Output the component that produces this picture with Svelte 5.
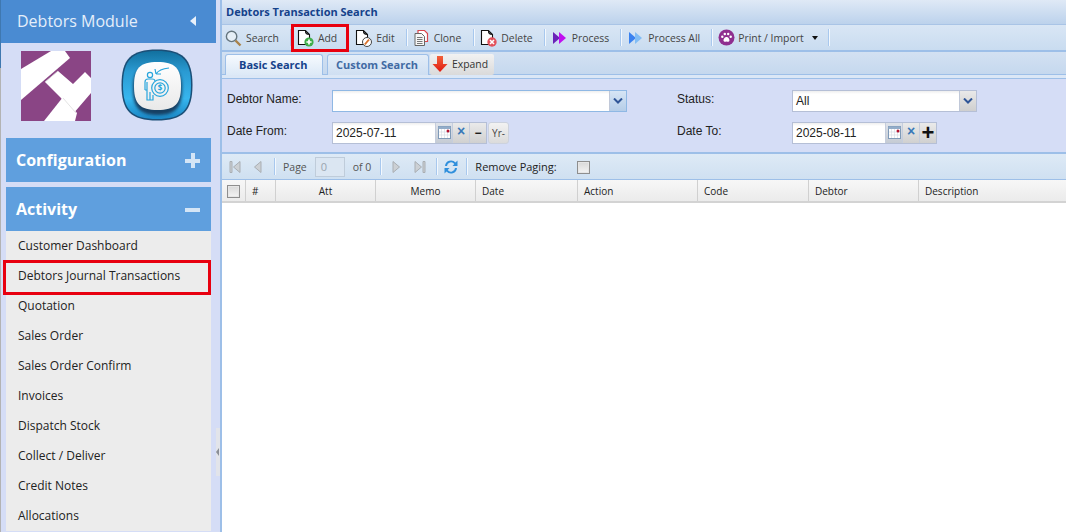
<script>
  const menu = ['Customer Dashboard','Debtors Journal Transactions','Quotation','Sales Order','Sales Order Confirm','Invoices','Dispatch Stock','Collect / Deliver','Credit Notes','Allocations'];
  const cols = [
    {t:'Att',w:100,c:1},{t:'Memo',w:100,c:1},{t:'Date',w:102},{t:'Action',w:120},{t:'Code',w:111},{t:'Debtor',w:110},{t:'Description',w:147}
  ];
</script>

<div class="page">
  <aside class="side">
    <div class="mod"><span>Debtors Module</span><i class="tri"></i></div>
    <div class="logos">
      <svg class="logo1" viewBox="0 0 70 70" width="70" height="70">
        <rect width="70" height="70" fill="#8a4585"/>
        <path d="M0 18 L30 0 L44 0 L49 7 L0 49Z" fill="#fff"/>
        <path d="M37 20 L52 33 L64 21 L70 27 L70 42 L52 63 L40 47 L24 31Z" fill="#fff"/>
        <path d="M42 46 L23 70 L54 70 L56 62Z" fill="#fff"/>
        <path d="M24 31 L37 20 M42 47 L55 62" stroke="#dcdcdc" stroke-width=".8" fill="none"/>
      </svg>
      <svg class="logo2" viewBox="0 0 72 72" width="72" height="72">
        <defs>
          <linearGradient id="rim" x1="0" y1="0" x2="0" y2="1"><stop offset="0" stop-color="#12709f"/><stop offset=".3" stop-color="#2a9ad2"/><stop offset=".7" stop-color="#37b6ee"/><stop offset="1" stop-color="#1a86c4"/></linearGradient>
          <linearGradient id="face" x1="0" y1="0" x2="0" y2="1"><stop offset="0" stop-color="#fff"/><stop offset="1" stop-color="#e9e9e9"/></linearGradient>
          <filter id="soft" x="-20%" y="-20%" width="140%" height="140%"><feGaussianBlur stdDeviation="1.6"/></filter>
        </defs>
        <path d="M36 .5 C62 .5 71.5 10 71.5 36 C71.5 62 62 71.5 36 71.5 C10 71.5 .5 62 .5 36 C.5 10 10 .5 36 .5Z" fill="#1b4f77"/>
        <path d="M36 2 C61 2 70 11 70 36 C70 61 61 70 36 70 C11 70 2 61 2 36 C2 11 11 2 36 2Z" fill="url(#rim)"/>
        <path d="M36.5 16 C55 16 61 22 61 40 C61 58 55 66 36.5 66 C18 66 12 58 12 40 C12 22 18 16 36.5 16Z" fill="#123f63" filter="url(#soft)"/>
        <path d="M36.5 13 C54 13 60 19 60 37 C60 55 54 61 36.5 61 C19 61 13 55 13 37 C13 19 19 13 36.5 13Z" fill="url(#face)"/>
        <g fill="none" stroke="#27a5dc" stroke-width="1.2">
          <circle cx="39" cy="39" r="8.3"/><circle cx="39" cy="39" r="5.2"/>
          <circle cx="29" cy="26" r="2.6"/>
          <path d="M24 41 V33 Q24 30 27 30 H31 Q34 30 34 32 M26 33 V41 H24 M26 41 V51 H29 V43 M29 51 H32 V46"/>
          <path d="M35 25 Q38 20 48 19 M35 25 L34 20 M35 25 L40 25"/>
        </g>
        <text x="39" y="42" font-size="8" font-weight="700" fill="#27a5dc" text-anchor="middle" font-family="Open Sans">$</text>
      </svg>
    </div>
    <div class="acc conf"><span>Configuration</span><b class="plus"></b></div>
    <div class="acc act"><span>Activity</span><b class="minus"></b></div>
    <ul class="menu">
      {#each menu as m}<li>{m}</li>{/each}
    </ul>
    <div class="redbox side-red"></div>
  </aside>

  <div class="split"><div class="grip"><i></i></div></div>

  <main class="main">
    <div class="title">Debtors Transaction Search</div>

    <div class="toolbar">
      <button class="tool t-search">
        <svg width="18" height="18" viewBox="0 0 18 18"><circle cx="7.6" cy="7.4" r="5.2" fill="#e6eff7" stroke="#66767f" stroke-width="1.4"/><path d="M11.5 11.5 L16.5 16.5" stroke="#a9824a" stroke-width="2.4"/></svg>
        Search</button><i class="sep"></i>
      <button class="tool t-add">
        <svg width="18" height="18" viewBox="0 0 18 18"><path d="M2.5 1.5 H9.5 L13.5 5.5 V15.5 H2.5Z M9.5 1.5 Q9 5.5 13.5 5.5" fill="#fff" stroke="#111" stroke-width="1.1"/><circle cx="13" cy="13" r="4.6" fill="#3fae4a"/><path d="M13 10.4 V15.6 M10.4 13 H15.6" stroke="#fff" stroke-width="1.7"/></svg>
        Add</button>
      <button class="tool t-edit">
        <svg width="18" height="18" viewBox="0 0 18 18"><path d="M2.5 1.5 H9.5 L13.5 5.5 V15.5 H2.5Z M9.5 1.5 Q9 5.5 13.5 5.5" fill="#fff" stroke="#111" stroke-width="1.1"/><circle cx="13" cy="13" r="4.5" fill="#fff" stroke="#444"/><path d="M10.8 15.5 L15 10.5" stroke="#d9702a" stroke-width="1.9"/></svg>
        Edit</button><i class="sep"></i>
      <button class="tool t-clone">
        <svg width="18" height="18" viewBox="0 0 18 18"><path d="M6 4 V1.5 H12.5 L15.5 4.5 V12.5 H13" fill="#fff" stroke="#d9474c" stroke-width="1.2"/><path d="M3 4.5 H9.5 L12.5 7.5 V16.5 H3Z" fill="#f6f6f6" stroke="#666"/><path d="M5 8.5 H10.5 M5 10.5 H10.5 M5 12.5 H10.5 M5 14.5 H10.5" stroke="#777"/></svg>
        Clone</button><i class="sep"></i>
      <button class="tool t-del">
        <svg width="18" height="18" viewBox="0 0 18 18"><path d="M2.5 1.5 H9.5 L13.5 5.5 V15.5 H2.5Z M9.5 1.5 Q9 5.5 13.5 5.5" fill="#fff" stroke="#111" stroke-width="1.1"/><circle cx="13" cy="13" r="4.7" fill="#e2525c"/><path d="M11 11 L15 15 M15 11 L11 15" stroke="#fff" stroke-width="1.6"/></svg>
        Delete</button><i class="sep"></i>
      <button class="tool t-proc">
        <svg width="15" height="14" viewBox="0 0 15 14"><path d="M1 1 L8 7 L1 13Z" fill="#6a22b8"/><path d="M7 1 L14 7 L7 13Z" fill="#c010f0"/></svg>
        Process</button><i class="sep"></i>
      <button class="tool t-all">
        <svg width="15" height="14" viewBox="0 0 15 14"><path d="M1 1 L8 7 L1 13Z" fill="#3b82f0"/><path d="M7 1 L14 7 L7 13Z" fill="#82bdf5"/></svg>
        Process All</button><i class="sep"></i>
      <button class="tool t-print">
        <svg width="17" height="17" viewBox="0 0 17 17"><circle cx="8.5" cy="8.5" r="8" fill="#8f2f8f"/><path d="M8.5 8 C6.5 8 5.2 10.5 5.6 12 C6.2 13.2 7.5 12.4 8.5 12.4 C9.5 12.4 10.8 13.2 11.4 12 C11.8 10.5 10.5 8 8.5 8Z" fill="#fff"/><circle cx="4.3" cy="7.8" r="1.2" fill="#fff"/><circle cx="6.8" cy="5" r="1.2" fill="#fff"/><circle cx="10.2" cy="5" r="1.2" fill="#fff"/><circle cx="12.7" cy="7.8" r="1.2" fill="#fff"/></svg>
        Print / Import<i class="caret"></i></button><i class="sep"></i>
    </div>

    <div class="tabs">
      <div class="tab on">Basic Search</div>
      <div class="tab">Custom Search</div>
      <button class="expand">
        <svg width="16" height="18" viewBox="0 0 16 18"><defs><linearGradient id="ar" x1="0" y1="0" x2="0" y2="1"><stop offset="0" stop-color="#f2613a"/><stop offset="1" stop-color="#e01a10"/></linearGradient></defs><path d="M5 1 H11 V9 H15.5 L8 17 L.5 9 H5Z" fill="url(#ar)"/></svg>
        Expand</button>
    </div>
    <div class="tabfoot"></div>

    <div class="form">
      <div class="frow r1">
        <label class="l1">Debtor Name:</label>
        <div class="combo c-debtor"><div class="inp"></div><div class="arrow hl"><svg width="10" height="6" viewBox="0 0 10 6"><path d="M1 .5 L5 4.5 L9 .5" fill="none" stroke="#2f5597" stroke-width="2"/></svg></div></div>
        <label class="l2">Status:</label>
        <div class="combo c-status"><div class="inp">All</div><div class="arrow"><svg width="10" height="6" viewBox="0 0 10 6"><path d="M1 .5 L5 4.5 L9 .5" fill="none" stroke="#2f5597" stroke-width="2"/></svg></div></div>
      </div>
      <div class="frow r2">
        <label class="l1">Date From:</label>
        <div class="date">
          <div class="inp">2025-07-11</div>
          <div class="dbtn cal"><svg width="13" height="13" viewBox="0 0 13 13"><rect x=".5" y=".5" width="12" height="12" fill="#fff" stroke="#7f9ab8"/><rect x=".5" y=".5" width="12" height="2.5" fill="#94adc9"/><path d="M3.5 3 V12 M6.5 3 V12 M9.5 3 V12 M1 6 H12 M1 9 H12" stroke="#d5dde6" stroke-width=".7"/><circle cx="10" cy="5" r="1.5" fill="#b01030"/></svg></div>
          <div class="dbtn x">×</div>
          <div class="dbtn pm minus-b">−</div>
        </div>
        <button class="yr">Yr-</button>
        <label class="l2 l2b">Date To:</label>
        <div class="date to">
          <div class="inp">2025-08-11</div>
          <div class="dbtn cal"><svg width="13" height="13" viewBox="0 0 13 13"><rect x=".5" y=".5" width="12" height="12" fill="#fff" stroke="#7f9ab8"/><rect x=".5" y=".5" width="12" height="2.5" fill="#94adc9"/><path d="M3.5 3 V12 M6.5 3 V12 M9.5 3 V12 M1 6 H12 M1 9 H12" stroke="#d5dde6" stroke-width=".7"/><circle cx="10" cy="5" r="1.5" fill="#b01030"/></svg></div>
          <div class="dbtn x">×</div>
          <div class="dbtn pm plus-b">+</div>
        </div>
      </div>
    </div>

    <div class="pager">
      <span class="pg first"><svg width="14" height="14" viewBox="0 0 14 14"><path d="M2 1.5 H4 V12.5 H2Z M12 1.5 V12.5 L5.5 7Z" fill="#ccd0d4" stroke="#a9aeb3"/></svg></span>
      <span class="pg prev"><svg width="14" height="14" viewBox="0 0 14 14"><path d="M10 1.5 V12.5 L3.5 7Z" fill="#ccd0d4" stroke="#a9aeb3"/></svg></span>
      <i class="sep"></i>
      <span class="ptxt page-l">Page</span>
      <span class="pnum">0</span>
      <span class="ptxt of">of 0</span>
      <i class="sep"></i>
      <span class="pg next"><svg width="14" height="14" viewBox="0 0 14 14"><path d="M4 1.5 V12.5 L10.5 7Z" fill="#ccd0d4" stroke="#a9aeb3"/></svg></span>
      <span class="pg last"><svg width="14" height="14" viewBox="0 0 14 14"><path d="M12 1.5 H10 V12.5 H12Z M2 1.5 V12.5 L8.5 7Z" fill="#ccd0d4" stroke="#a9aeb3"/></svg></span>
      <i class="sep"></i>
      <span class="pg refresh"><svg width="16" height="16" viewBox="0 0 16 16"><path d="M2 7 A6 6 0 0 1 12.5 3.5 L14.5 1.5 V7 H9.5 L11.3 5 A4 4 0 0 0 4 7Z" fill="#2f8fdc"/><path d="M14 9 A6 6 0 0 1 3.5 12.5 L1.5 14.5 V9 H6.5 L4.7 11 A4 4 0 0 0 12 9Z" fill="#2f8fdc"/></svg></span>
      <i class="sep"></i>
      <span class="rp">Remove Paging:</span>
      <span class="check rp-c"></span>
    </div>

    <div class="ghead">
      <div class="gc g-chk"><span class="check small"></span></div>
      <div class="gc g-num">#</div>
      {#each cols as c}
        <div class="gc" class:ctr={c.c} style="width:{c.w}px">{c.t}</div>
      {/each}
    </div>
    <div class="gbody"></div>

    <div class="redbox add-red"></div>
  </main>
</div>

<style>
  :global(body){margin:0;background:#fff;overflow:hidden}
  .page{display:flex;width:1066px;height:532px;overflow:hidden;font-family:"Open Sans",sans-serif;color:#333}
  .side{position:relative;width:216px;flex:none;background:linear-gradient(#3f78b0 68px,#b3b3b3 68px) 0 0/1px 100% no-repeat,#d5ddf6;padding-left:1px;box-sizing:border-box;overflow:hidden}
  .mod{height:43px;background:#4a8bd2;color:#e4eefa;font-size:16px;display:flex;align-items:center;justify-content:space-between;padding:0 20px 2px 16px;box-sizing:border-box}
  .tri{width:0;height:0;border:5px solid transparent;border-right:6px solid #e8f0fa;border-left:0}
  .logos{height:95px;display:flex;align-items:flex-start}
  .logo1{margin:8px 0 0 20px}
  .logo2{margin:6px 0 0 30px}
  .acc{margin-left:5px;width:205px;height:44px;background:#5f9fde;color:#fff;font-size:16px;font-weight:700;display:flex;align-items:center;justify-content:space-between;padding:0 11px 0 10px;box-sizing:border-box}
  .conf{margin-bottom:5px}
  .plus,.minus{position:relative;width:15px;height:15px;display:block}
  .plus::before,.minus::before{content:"";position:absolute;left:0;right:0;top:6px;height:4px;background:#d4e5f6}
  .plus::after{content:"";position:absolute;top:0;bottom:0;left:6px;width:4px;background:#d4e5f6}
  .menu{list-style:none;margin:0 0 0 5px;padding:0;width:205px;background:#ececec}
  .menu li{height:30px;line-height:29px;padding-left:12px;font-size:12px;color:#222}
  .redbox{position:absolute;border:3px solid #e8000f;box-sizing:border-box;pointer-events:none}
  .side-red{left:3px;top:260px;width:208px;height:35px}
  .split{width:4px;flex:none;background:#d5ddf6;position:relative}
  .grip{position:absolute;left:0;top:428px;width:4px;height:48px;background:#e2e4ea}
  .grip i{position:absolute;left:0;top:20px;border:4px solid transparent;border-right:3px solid #8b8f96;border-left:0}
  .main{position:relative;flex:1;min-width:0;border-left:2px solid #9dbfe8;display:flex;flex-direction:column;background:#fff}
  .title{height:24px;border-bottom:1px solid #a9c4e6;background:linear-gradient(#dfe9f6,#bcd2ec);color:#15428b;font-size:11px;font-weight:700;line-height:24px;padding-left:4px;box-sizing:content-box;flex:none}
  .toolbar{height:25px;border-bottom:2px solid #9dbfe8;background:linear-gradient(#d9e6f5,#c9dcf0);display:flex;align-items:center;padding-left:2px;flex:none}
  .tool{border:0;background:none;padding:0;display:flex;align-items:center;gap:4px;font:10.4px "Open Sans",sans-serif;color:#444;white-space:nowrap}
  .tool svg{flex:none}
  .sep{width:1px;height:17px;background:#a8c8ee;border-right:1px solid #f3f8fd;flex:none}
  .t-search{margin-right:11px}
  .t-add{margin-left:4px;margin-right:17px}
  .t-edit{margin-right:11px}
  .t-clone{margin:0 12px 0 4px}
  .t-del{margin:0 11px 0 4px}
  .t-proc{margin:0 11px 0 6px;gap:5px}
  .t-all{margin:0 11px 0 6px;gap:5px}
  .t-print{margin:0 10px 0 5px;gap:3px}
  .caret{width:0;height:0;border:3px solid transparent;border-top:4px solid #111;border-bottom:0;margin-left:5px}
  .tabs{height:23px;background:linear-gradient(#d3e1f2,#c5d8ee);border-bottom:1px solid #9dbfe8;display:flex;align-items:flex-end;padding-left:3px;gap:4px;box-sizing:border-box;flex:none}
  .tabfoot{height:4px;box-sizing:border-box;background:#dbe7f6;border-bottom:1px solid #9dbfe8;flex:none}
  .tab{height:21px;line-height:19px;box-sizing:border-box;border:1px solid #9dbfe8;border-bottom:0;border-radius:3px 3px 0 0;font-size:11px;font-weight:700;color:#416aa3;background:linear-gradient(#e3edf8,#cfdff2);margin-bottom:-1px;position:relative}
  .tab.on{color:#15428b;background:linear-gradient(#f6fafe,#dce9f7);width:98px;padding:0 0 0 13px}
  .tab:nth-child(2){width:102px;padding:0 0 0 8px}
  .expand{margin-left:-3px;margin-bottom:-1px;height:21px;width:64px;padding:0 0 1px 2px;border:0;border-radius:2px;background:linear-gradient(#f2f2f2,#dadada);font:10.4px "Open Sans",sans-serif;color:#333;display:flex;align-items:center;gap:4px;position:relative}
  .form{height:73px;background:#d5ddf6;box-sizing:border-box;flex:none}
  .frow{display:flex;align-items:flex-start;font-family:"Liberation Sans",sans-serif;font-size:12px;color:#222}
  .r1{padding-top:11px;height:32px;box-sizing:content-box}
  .r1 label{line-height:19px}
  .r2 label{line-height:19px}
  .l1{width:105px;padding-left:5px;flex:none}
  .combo{display:flex;height:22px;box-sizing:border-box;border:1px solid #b5bfd6;flex:none}
  .c-debtor{width:295px;border-color:#8fb8e4}
  .c-status{width:185px}
  .inp{flex:1;background:linear-gradient(#eee 0,#fff 3px);height:100%;font-size:12px;line-height:20px;padding-left:3px;color:#222;box-sizing:border-box;font-family:"Liberation Sans",sans-serif}
  .arrow{width:17px;box-sizing:border-box;background:linear-gradient(#e9e9e9,#cfcfcf);display:flex;align-items:center;justify-content:center;border-left:1px solid #c0c8d8}
  .arrow.hl{background:linear-gradient(#d6e5f5,#b5cde8)}
  .l2{width:115px;margin-left:50px;flex:none}
  .r2 .l2b{margin-left:168px;width:115px}
  .date{display:flex;height:22px;box-sizing:border-box;border:1px solid #b5bfd6;flex:none}
  .date .inp{width:102px;flex:none;font-size:12px}
  .date.to .inp{width:92px}
  .dbtn{width:17px;height:20px;box-sizing:border-box;border-left:1px solid #c5cddd;background:linear-gradient(#eaeaea,#d0d0d0);display:flex;align-items:center;justify-content:center;flex:none}
  .cal{background:linear-gradient(#dfe3ea,#c5cbd4);padding-bottom:2px}
  .x{color:#3a78b8;font:700 14px "Liberation Sans",sans-serif;padding-bottom:4px}
  .pm{color:#111;font:700 22px/1 "Liberation Sans",sans-serif}
  .minus-b{font-size:12px}
  .yr{margin-left:1px;width:21px;height:22px;padding:0;border:1px solid #ccd2de;border-radius:3px;background:linear-gradient(#f2f2f2,#dbdbdb);font:10px "Open Sans",sans-serif;color:#444;flex:none}
  .pager{height:28px;box-sizing:border-box;border-top:2px solid #9dbfe8;border-bottom:1px solid #9dbfe8;background:linear-gradient(#deeaf6,#cfe0f1);display:flex;align-items:center;font-size:10.5px;color:#555;flex:none}
  .pg{display:flex;width:14px;justify-content:center;flex:none}
  .first{margin-left:6px;margin-right:9px}
  .prev{margin-right:9px}
  .ptxt{flex:none;white-space:nowrap}
  .page-l{margin:0 8px 0 7px}
  .pnum{width:30px;height:20px;box-sizing:border-box;border:1px solid #bfccda;background:#dbe6f2;color:#9aa5b0;line-height:18px;padding-left:5px;flex:none;font-size:11px}
  .of{margin:0 9px 0 8px}
  .next{margin:0 10px 0 7px}
  .last{margin-right:9px}
  .refresh{margin:0 7px 0 5px;width:16px}
  .rp{margin-left:7px;font-size:11px;color:#222;white-space:nowrap}
  .check{display:block;width:13px;height:13px;box-sizing:border-box;border:1px solid #8e8e8e;background:linear-gradient(#d8d8d8,#f4f4f4);outline:1px solid #e6e6e6;outline-offset:-2px}
  .rp-c{margin:2px 0 0 20px}
  .ghead{height:23px;display:flex;box-sizing:border-box;background:linear-gradient(#f7f7f7,#ebebeb);border-bottom:2px solid #d3d3d3;font-size:10px;color:#222;flex:none}
  .gc{height:100%;border-right:1px solid #d0d0d0;box-sizing:border-box;display:flex;align-items:center;padding:1px 0 0 6px;flex:none;white-space:nowrap}
  .gc.ctr{justify-content:center;padding-left:0}
  .gc:last-child{border-right:0}
  .g-chk{width:24px;padding-left:5px}
  .g-num{width:30px;padding-left:6px}
  .gbody{flex:1;background:#fff}
  .add-red{left:69px;top:24px;width:58px;height:28px}
</style>
